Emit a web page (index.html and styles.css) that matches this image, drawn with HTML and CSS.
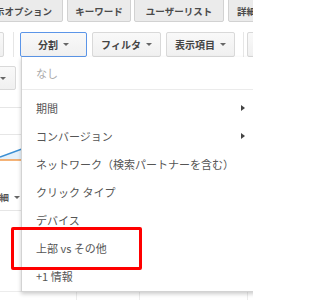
FILE: index.html
```html
<!DOCTYPE html>
<html lang="ja">
<head>
<meta charset="utf-8">
<link rel="stylesheet" href="styles.css">
</head>
<body>
<div class="page">
  <div class="tabs">
    <div class="tab tab-opt">表示オプション</div>
    <div class="tab tab-kw">キーワード</div>
    <div class="tab tab-ul">ユーザーリスト</div>
    <div class="tab tab-dt">詳細</div>
  </div>
  <div class="toolbar">
    <div class="btn stub-left"></div>
    <div class="sep sep-a"></div>
    <div class="btn btn-seg focus">分割<span class="caret"></span></div>
    <div class="btn btn-filter">フィルタ<span class="caret"></span></div>
    <div class="btn btn-cols">表示項目<span class="caret"></span></div>
    <div class="sep sep-b"></div>
    <div class="btn stub-right"></div>
  </div>
  <div class="content">
    <div class="subbar"><div class="btn stub-sub"><span class="caret"></span></div></div>
    <div class="rule rule-1"></div>
    <div class="rule rule-2"></div>
    <svg class="chart" width="253" height="30" viewBox="0 0 253 30">
      <polygon points="0,22 60,0 60,25 0,25" fill="#e4f0fa"/>
      <line x1="0" y1="25" x2="253" y2="25" stroke="#f29a4a" stroke-width="1.5"/>
      <line x1="0" y1="22" x2="60" y2="0" stroke="#3b8fd3" stroke-width="1.6"/>
    </svg>
    <div class="detail">詳細<span class="caret"></span></div>
    <div class="rule rule-3"></div>
    <div class="grid-row">
      <div class="cell cell-a"></div>
      <div class="cell cell-b"></div>
      <div class="cell cell-c"></div>
      <div class="cell cell-d"></div>
    </div>
  </div>

  <div class="menu">
    <div class="item none">なし</div>
    <div class="divider"></div>
    <div class="item">期間<span class="sub"></span></div>
    <div class="item">コンバージョン<span class="sub"></span></div>
    <div class="item">ネットワーク（検索パートナーを含む）</div>
    <div class="item">クリック タイプ</div>
    <div class="item">デバイス</div>
    <div class="item">上部 vs その他</div>
    <div class="item">+1 情報</div>
  </div>
  <div class="highlight"></div>
</div>
</body>
</html>
```
FILE: styles.css
```css
html, body {
  margin: 0;
  padding: 0;
  background: #fff;
}
.page {
  position: relative;
  width: 253px;
  height: 300px;
  overflow: hidden;
  background: #fff;
  font-family: "Noto Sans CJK JP", "Noto Sans", sans-serif;
}

/* tabs */
.tabs {
  display: flex;
  margin-top: -4px;
  margin-left: -27px;
  gap: 4px;
}
.tab {
  box-sizing: border-box;
  height: 26px;
  padding-top: 4px;
  display: flex;
  align-items: center;
  justify-content: center;
  flex-shrink: 0;
  background: #ebebeb;
  border: 1px solid #d2d2d2;
  border-radius: 2px;
  font-size: 9.5px;
  font-weight: bold;
  color: #4a4a4a;
  white-space: nowrap;
}
.tab-opt { width: 90px; justify-content: flex-end; padding-right: 10px; }
.tab-kw { width: 64px; }
.tab-ul { width: 90px; margin-left: -1px; }
.tab-dt { width: 60px; justify-content: flex-start; padding-left: 8px; }

/* toolbar */
.toolbar {
  display: flex;
  align-items: center;
  margin-top: 10px;
  height: 25px;
}
.btn {
  box-sizing: border-box;
  height: 25px;
  display: flex;
  align-items: center;
  justify-content: center;
  gap: 5px;
  flex-shrink: 0;
  border: 1px solid #d9d9d9;
  border-radius: 2px;
  background: linear-gradient(#f9f9f9, #f0f0f0);
  font-size: 10px;
  font-weight: bold;
  color: #444;
  white-space: nowrap;
}
.btn.focus { border-color: #5b95e8; }
.stub-left { width: 24px; margin-left: -20px; }
.sep {
  width: 1px;
  height: 25px;
  background: #e6e6e6;
  flex-shrink: 0;
}
.sep-a { margin-left: 9px; }
.btn-seg { width: 67px; margin-left: 6px; }
.btn-filter { width: 69px; margin-left: 5px; }
.btn-cols { width: 69px; margin-left: 5px; }
.sep-b { margin-left: 8px; }
.stub-right { width: 30px; margin-left: 3px; }

.caret {
  width: 0;
  height: 0;
  border-left: 3px solid transparent;
  border-right: 3px solid transparent;
  border-top: 3.5px solid #666;
}

/* background content */
.content {
  display: flex;
  flex-direction: column;
}
.subbar {
  margin-top: 9px;
  height: 24px;
  display: flex;
}
.stub-sub {
  width: 46px;
  height: 24px;
  margin-left: -30px;
  justify-content: flex-end;
  padding-right: 9px;
}
.rule {
  height: 1px;
  background: #e6e6e6;
}
.rule-1 { margin-top: 17px; }
.rule-2 { margin-top: 26px; }
.chart { display: block; }
.detail {
  margin-top: 24px;
  margin-left: -10px;
  height: 16px;
  display: flex;
  align-items: center;
  gap: 5px;
  font-size: 9.5px;
  font-weight: bold;
  color: #555;
}
.rule-3 { margin-top: 5px; }
.grid-row {
  display: flex;
  margin-top: 80px;
  height: 10px;
  border-top: 1px solid #ececec;
}
.cell {
  height: 10px;
  flex-shrink: 0;
  border-left: 1px solid #ececec;
}
.cell-a { width: 76px; border-left: none; }
.cell-b { width: 62px; }
.cell-c { width: 107px; }
.cell-d { width: 20px; }

/* dropdown menu */
.menu {
  position: absolute;
  left: 21px;
  top: 57px;
  width: 236px;
  box-sizing: border-box;
  padding: 2px 0 1px;
  background: #fff;
  border: 1px solid #d3d3d3;
  border-top: none;
  box-shadow: 0 2px 4px rgba(0, 0, 0, 0.2);
}
.item {
  height: 28px;
  display: flex;
  align-items: center;
  justify-content: space-between;
  padding: 0 11px 0 14px;
  font-size: 11px;
  color: #555;
  white-space: nowrap;
}
.item.none { color: #aaa; }
.divider {
  height: 1px;
  background: #ebebeb;
  margin: 2px 0 4px;
}
.sub {
  width: 0;
  height: 0;
  border-top: 3.5px solid transparent;
  border-bottom: 3.5px solid transparent;
  border-left: 4px solid #444;
}

/* annotation */
.highlight {
  position: absolute;
  left: 11px;
  top: 227px;
  width: 131px;
  height: 43px;
  box-sizing: border-box;
  border: 3px solid #f00;
  border-radius: 2px;
}
```
